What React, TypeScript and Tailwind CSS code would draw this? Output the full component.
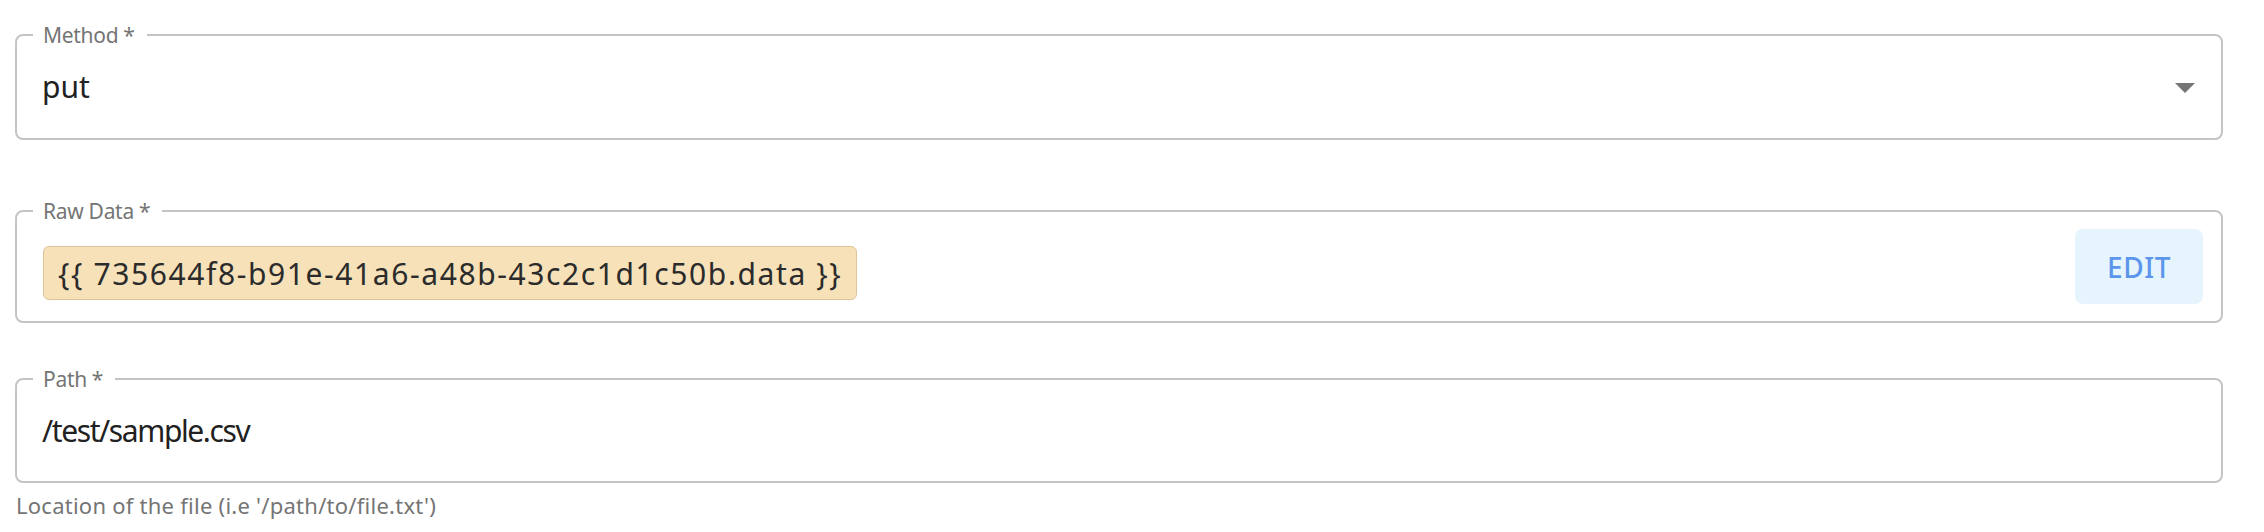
const font = "font-['Noto_Sans','Lato',sans-serif]";

function Field({ label, height, children, className = '' }: { label: string; height: string; children: React.ReactNode; className?: string }) {
  return (
    <div className={`relative flex items-center rounded-[8px] border-2 border-[#c4c4c4] ${height} ${className}`}>
      <span className="absolute left-[16px] top-[-15px] bg-white pl-[10px] pr-[12px] text-[21px] leading-[28px] tracking-[-0.3px] text-[#757575]">
        {label}
        <span className="ml-[5px]">*</span>
      </span>
      {children}
    </div>
  );
}

export default function App() {
  return (
    <div className={`min-h-screen bg-white pl-[15px] pr-[41px] pt-[34px] ${font}`}>
      {/* Method select */}
      <Field label="Method" height="h-[106px]" className="justify-between pl-[25px] pr-[26px]">
        <span className="text-[30px] leading-[40px] text-[#212121]">put</span>
        <svg width="20" height="10" viewBox="0 0 20 10" className="mt-[2px]">
          <path d="M0 0 L20 0 L10 10 Z" fill="#757575" />
        </svg>
      </Field>

      {/* Raw data with expression chip */}
      <Field label="Raw Data" height="h-[113px]" className="mt-[70px] justify-between pl-[26px] pr-[18px]">
        <span className="mt-[13px] flex h-[54px] items-center rounded-[6px] border border-[#dcc49a] bg-[#f6e1b9] px-[14px] text-[30px] tracking-[1.6px] text-[#2b2b2b]">
          {'{{ 735644f8-b91e-41a6-a48b-43c2c1d1c50b.data }}'}
        </span>
        <button className="h-[75px] w-[128px] rounded-[8px] bg-[#e6f4fd] text-[28px] font-medium tracking-[0.02em] text-[#5b95ec]">
          EDIT
        </button>
      </Field>

      {/* Path */}
      <Field label="Path" height="h-[105px]" className="mt-[55px] pl-[25px]">
        <span className="text-[30px] leading-[40px] tracking-[-1.4px] text-[#212121]">/test/sample.csv</span>
      </Field>
      <p className="mt-[7px] pl-[1px] text-[22px] leading-[30px] tracking-[0.25px] text-[#757575]">Location of the file (i.e '/path/to/file.txt')</p>
    </div>
  );
}
